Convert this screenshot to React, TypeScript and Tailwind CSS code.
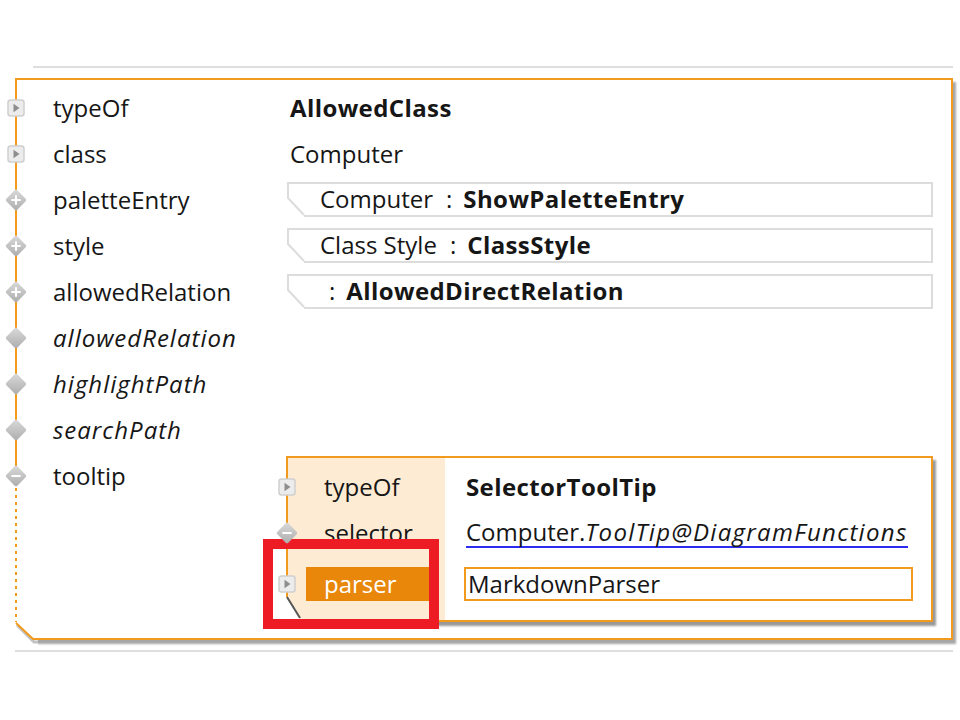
import React from 'react';

const FONT = { fontFamily: '"Open Sans", "Noto Sans", "Liberation Sans", sans-serif' };

function SquareIcon() {
  return (
    <svg width="18" height="18" viewBox="0 0 18 18">
      <rect x="1" y="1" width="16" height="16" rx="2.5" fill="#ececec" stroke="#cfcfcf" strokeWidth="1.5" />
      <path d="M6.5 4.8 L12.5 9 L6.5 13.2 Z" fill="#8e8e8e" />
    </svg>
  );
}

function Diamond({ sign }: { sign?: 'plus' | 'minus' }) {
  return (
    <svg width="24" height="24" viewBox="0 0 23 23">
      <defs>
        <linearGradient id="dg" x1="0" y1="0" x2="0" y2="1">
          <stop offset="0" stopColor="#d9d9d9" />
          <stop offset="1" stopColor="#aeaeae" />
        </linearGradient>
      </defs>
      <path d="M11.5 1.5 Q12 1.5 12.5 2 L21 10.5 Q21.5 11.5 21 12.5 L12.5 21 Q11.5 21.8 10.5 21 L2 12.5 Q1.5 11.5 2 10.5 L10.5 2 Q11 1.5 11.5 1.5 Z" fill="url(#dg)" />
      {sign === 'plus' && <path d="M11.5 7 V16 M7 11.5 H16" stroke="#ffffff" strokeWidth="2" />}
      {sign === 'minus' && <path d="M7 11.5 H16" stroke="#ffffff" strokeWidth="2" />}
    </svg>
  );
}

type Row = { icon: 'sq' | 'plus' | 'minus' | 'plain'; label: string; italic?: boolean };

function Icon({ kind }: { kind: Row['icon'] }) {
  if (kind === 'sq') return <SquareIcon />;
  if (kind === 'plus') return <Diamond sign="plus" />;
  if (kind === 'minus') return <Diamond sign="minus" />;
  return <Diamond />;
}

function ValueBox({ children }: { children: React.ReactNode }) {
  return (
    <div className="relative -ml-[3px] -mt-[2px] h-[35px] border-t-2 border-r-2 border-b-2 border-[#dcdcdc] flex items-center pl-[33px] bg-white">
      <svg className="absolute left-0 top-[-2px]" width="20" height="35" viewBox="0 0 20 35">
        <polygon points="0,16 17,33 17,35 0,35" fill="#ffffff" />
        <path d="M1 0 V16 L17 33" stroke="#dcdcdc" strokeWidth="2" fill="none" />
      </svg>
      <div className="relative whitespace-nowrap">{children}</div>
    </div>
  );
}

export default function App() {
  const rows: Row[] = [
    { icon: 'sq', label: 'typeOf' },
    { icon: 'sq', label: 'class' },
    { icon: 'plus', label: 'paletteEntry' },
    { icon: 'plus', label: 'style' },
    { icon: 'plus', label: 'allowedRelation' },
    { icon: 'plain', label: 'allowedRelation', italic: true },
    { icon: 'plain', label: 'highlightPath', italic: true },
    { icon: 'plain', label: 'searchPath', italic: true },
  ];

  const bold = 'font-bold tracking-[0.4px]';

  const values: React.ReactNode[] = [
    <span className={bold}>AllowedClass</span>,
    <span>Computer</span>,
    <ValueBox>
      Computer<span className="ml-[13px] mr-[11px]">:</span><span className={bold}>ShowPaletteEntry</span>
    </ValueBox>,
    <ValueBox>
      Class Style<span className="ml-[13px] mr-[11px]">:</span><span className={bold}>ClassStyle</span>
    </ValueBox>,
    <ValueBox>
      <span className="ml-[9px] mr-[11px]">:</span><span className={bold}>AllowedDirectRelation</span>
    </ValueBox>,
    null,
    null,
    null,
  ];

  return (
    <div className="relative w-[960px] h-[720px] bg-white overflow-hidden text-[24px] text-[#161616]" style={FONT}>
      <div className="pt-[66px]">
        <div className="ml-[33px] w-[920px] h-[2px] bg-[#dedede]" />
      </div>

      {/* outer box */}
      <div className="relative mt-[10px] ml-[16px] w-[937px] border-t-2 border-r-2 border-b-2 border-[#f29a1e] bg-white pt-[5px] pb-[16px] shadow-[3px_4px_2px_rgba(0,0,0,0.35)]">
        {/* left rail */}
        <svg className="absolute left-[-8px] top-[-2px]" width="40" height="570" viewBox="0 0 40 570">
          <path d="M8 0 V400" stroke="#f29a1e" strokeWidth="2" />
          <path d="M8 410 V545" stroke="#f29a1e" strokeWidth="2" strokeDasharray="3 4" />
          <polygon points="0,544 8,544 26,560 30,560 30,570 0,570" fill="#ffffff" />
          <path d="M9 547 L26 564 H30" stroke="#9a9a9a" strokeWidth="3" fill="none" opacity="0.6" />
          <path d="M8 545 L25 561 H30" stroke="#f29a1e" strokeWidth="2" fill="none" />
        </svg>

        {rows.map((r, i) => (
          <div key={i} className="relative flex h-[46px] items-center">
            <div className="-ml-[12px] w-[24px] flex justify-center">
              <Icon kind={r.icon} />
            </div>
            <div className={`w-[262px] pl-[25px] whitespace-nowrap ${r.italic ? 'italic tracking-[1px]' : ''}`}>{r.label}</div>
            <div className="flex-1 pr-[18px]">{values[i]}</div>
          </div>
        ))}

        {/* tooltip row */}
        <div className="relative flex items-start">
          <div className="-ml-[12px] w-[24px] h-[46px] flex items-center justify-center">
            <Icon kind="minus" />
          </div>
          <div className="w-[262px] pl-[25px] h-[46px] flex items-center">tooltip</div>
          <div className="flex-1 pr-[18px] pt-[3px]">
            {/* inner box */}
            <div className="relative -ml-[3px] flex border-t-2 border-r-2 border-b-2 border-[#f29a1e] bg-white shadow-[3px_4px_2px_rgba(0,0,0,0.4)]">
              <div className="w-[158px] bg-[#fdebd3] pt-[6px] pb-[19px]">
                <div className="flex h-[46px] items-center">
                  <div className="-ml-[12px] w-[24px] flex justify-center relative z-10"><SquareIcon /></div>
                  <div className="ml-[7px] pl-[18px]">typeOf</div>
                </div>
                <div className="flex h-[46px] items-center">
                  <div className="-ml-[12px] w-[24px] flex justify-center relative z-10"><Diamond sign="minus" /></div>
                  <div className="ml-[7px] pl-[18px]">selector</div>
                </div>
                <div className="mt-[11px] flex h-[34px] items-center">
                  <div className="-ml-[12px] w-[24px] flex justify-center relative z-10"><SquareIcon /></div>
                  <div className="ml-[7px] w-[130px] h-[34px] flex items-center pl-[18px] bg-[#e9870a] text-white">parser</div>
                </div>
              </div>
              <div className="flex-1 pt-[6px] pb-[19px] pr-[18px]">
                <div className={`flex h-[46px] items-center pl-[21px] ${bold}`}>SelectorToolTip</div>
                <div className="flex h-[46px] items-center pl-[21px]">
                  <span className="border-b-2 border-[#2b2bf2] leading-[28px] whitespace-nowrap">
                    Computer.<span className="italic tracking-[1.3px]">ToolTip@DiagramFunctions</span>
                  </span>
                </div>
                <div className="mt-[11px] ml-[19px] h-[34px] border-2 border-[#f29a1e] flex items-center pl-[2px]">MarkdownParser</div>
              </div>
              {/* inner rail */}
              <svg className="absolute left-[-8px] top-[-2px] z-0" width="30" height="170" viewBox="0 0 30 170">
                <polygon points="0,140 8,140 22,164 22,170 0,170" fill="#ffffff" />
                <path d="M8 0 V141" stroke="#f29a1e" strokeWidth="2" />
                <path d="M8 141 L21 162" stroke="#555555" strokeWidth="2" fill="none" />
              </svg>
            </div>
          </div>
        </div>
      </div>

      <div className="mt-[10px] ml-[15px] w-[938px] h-[2px] bg-[#dedede]" />

      {/* red annotation */}
      <div className="absolute left-[263px] top-[539px] w-[176px] h-[90px] border-[10px] border-[#ed1c24]" />
    </div>
  );
}
